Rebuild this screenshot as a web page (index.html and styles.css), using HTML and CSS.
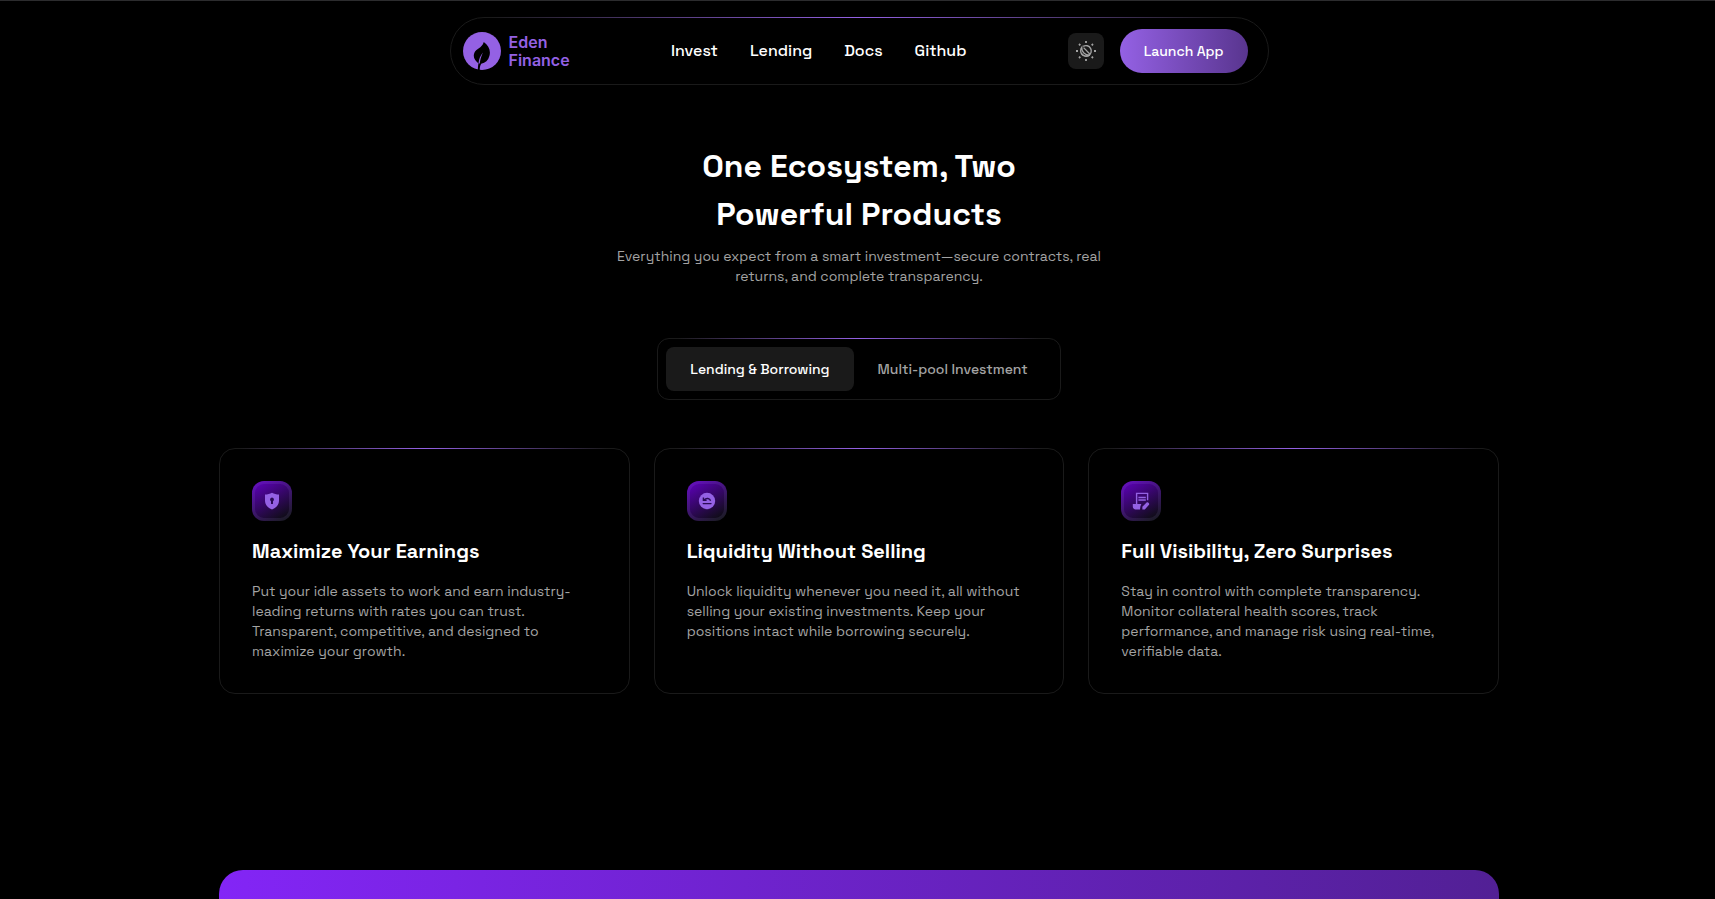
FILE: index.html
```
<!DOCTYPE html>
<html lang="en">
<head>
    <meta charset="UTF-8">
    <meta name="viewport" content="width=device-width, initial-scale=1.0">
    <title>Eden Finance</title>
    <link rel="stylesheet" href="styles.css">
</head>
<body>
    <div class="page">
        <header class="navbar glow">
            <a href="#" class="logo">
                <svg width="38" height="38" viewBox="0 0 38 38" aria-hidden="true">
                    <circle cx="19" cy="19" r="19" fill="#9461e4"/>
                    <path d="M14.8 38.2C14.9 35.6 15 33.6 15.5 31.4C12.3 28.8 9.6 25.6 11.3 21C13 16.4 18.8 16.6 20.8 10C25.6 13.6 28 18.2 26.4 24C25.2 28.4 22.4 31 18.2 31.8C17.2 33.4 16.7 35.6 16.7 38.2Z" fill="#000"/>
                    <path d="M15.5 31.4C16 27.2 17.2 23.8 20 20.6C18.2 24.6 17.2 27.8 16.8 31.6" fill="#9461e4"/>
                </svg>
                <span>Eden<br>Finance</span>
            </a>
            <nav class="nav-links">
                <a href="#invest">Invest</a>
                <a href="#lending">Lending</a>
                <a href="#docs">Docs</a>
                <a href="#github">Github</a>
            </nav>
            <div class="nav-actions">
                <button class="theme-btn" aria-label="Toggle theme">
                    <svg width="20" height="20" viewBox="0 0 20 20" fill="none" stroke="#a3a3a3" aria-hidden="true">
                        <path d="M7.2 5.4A5.3 5.3 0 1 1 5.2 12.2" stroke-width="1.4"/>
                        <path d="M5.8 6.2C5.4 10.8 9 14.4 13.8 14.2C9.8 16.6 4.6 14 4.6 9.8C4.6 8.4 5 7.2 5.8 6.2Z" stroke-width="1.2"/>
                        <path d="M7.6 6.6L13.8 13" stroke-width="1.3"/>
                        <path d="M10 0V2M10 18V20M0 10H2M18 10H20M3 3L4.3 4.3M15.7 15.7L17 17M3 17L4.3 15.7M15.7 4.3L17 3" stroke-width="1.8"/>
                    </svg>
                </button>
                <button class="launch-btn">Launch App</button>
            </div>
        </header>

        <main class="content">
            <section class="intro">
                <h1>One Ecosystem, Two Powerful Products</h1>
                <p>Everything you expect from a smart investment—secure contracts, real returns, and complete transparency.</p>
            </section>

            <div class="tabs glow" role="tablist">
                <button class="tab active" role="tab" aria-selected="true">Lending &amp; Borrowing</button>
                <button class="tab" role="tab" aria-selected="false">Multi-pool Investment</button>
            </div>

            <section class="cards">
                <article class="card glow">
                    <div class="card-icon">
                        <svg width="20" height="20" viewBox="0 0 20 20" aria-hidden="true">
                            <path d="M10 1.8C12.2 3 14.4 3.5 17 3.6V9.5C17 14 14.2 16.8 10 18.4C5.8 16.8 3 14 3 9.5V3.6C5.6 3.5 7.8 3 10 1.8Z" fill="#9461e4"/>
                            <path d="M10 6.6A2 2 0 0 0 9 10.3V13H11V10.3A2 2 0 0 0 10 6.6Z" fill="#2a0a55"/>
                        </svg>
                    </div>
                    <h2>Maximize Your Earnings</h2>
                    <p>Put your idle assets to work and earn industry-leading returns with rates you can trust. Transparent, competitive, and designed to maximize your growth.</p>
                </article>
                <article class="card glow">
                    <div class="card-icon">
                        <svg width="20" height="20" viewBox="0 0 20 20" aria-hidden="true">
                            <circle cx="10" cy="10" r="8.2" fill="#9461e4"/>
                            <path d="M6.2 12.6H14" stroke="#2a0a55" stroke-width="1.4" stroke-linecap="round"/>
                            <path d="M13.6 9.8C12.8 7.2 9.4 6.6 7.2 8.8M6.4 6.4V9.4H9.6" fill="none" stroke="#2a0a55" stroke-width="1.4"/>
                        </svg>
                    </div>
                    <h2>Liquidity Without Selling</h2>
                    <p>Unlock liquidity whenever you need it, all without selling your existing investments. Keep your positions intact while borrowing securely.</p>
                </article>
                <article class="card glow">
                    <div class="card-icon">
                        <svg width="20" height="20" viewBox="0 0 20 20" fill="none" stroke="#9461e4" aria-hidden="true">
                            <path d="M5.6 13.4V2.4H16.6V9.2" stroke-width="1.4"/>
                            <path d="M7.4 6.4H14.8M7.4 9H14.8" stroke-width="1.5"/>
                            <path d="M1.8 13H10.4L9.4 15.2L9 18.4H4.4C3 18.4 1.8 17.2 1.8 15.8Z" fill="#9461e4" stroke="none"/>
                            <path d="M11.4 18.4V15.8L15.6 11.4C16.8 10.4 19 12.4 18 13.8L13.8 18.4Z" fill="#9461e4" stroke="none"/>
                        </svg>
                    </div>
                    <h2>Full Visibility, Zero Surprises</h2>
                    <p>Stay in control with complete transparency. Monitor collateral health scores, track performance, and manage risk using real-time, verifiable data.</p>
                </article>
            </section>

            <section class="banner"></section>
        </main>
    </div>
</body>
</html>
```
FILE: styles.css
```
* {
    box-sizing: border-box;
    margin: 0;
    padding: 0;
}

body {
    background-color: #000;
    color: #fff;
    font-family: "Space Grotesk", Inter, sans-serif;
    font-size: 14px;
    line-height: 20px;
}

a {
    color: inherit;
    text-decoration: none;
}

button {
    border: none;
    font: inherit;
    font-weight: 500;
    cursor: pointer;
}

.page {
    min-height: 100vh;
    display: flex;
    flex-direction: column;
    align-items: center;
    padding: 16px 0 0 3px;
    border-top: 1px solid #2c2c2e;
}

/* purple line fading out along the top border */
.glow {
    position: relative;
    border: 1px solid #1a1a1a;
}

.glow::before {
    content: "";
    position: absolute;
    top: -1px;
    left: 5%;
    right: 5%;
    height: 1px;
    background: linear-gradient(90deg, transparent, #9461e4, transparent);
}

.navbar {
    width: 100%;
    max-width: 819px;
    display: flex;
    align-items: center;
    justify-content: space-between;
    padding: 11px 20px 11px 12px;
    border-radius: 34px;
}

.logo {
    display: flex;
    align-items: center;
    gap: 8px;
    color: #9461e4;
    font-family: Inter, sans-serif;
    font-size: 16px;
    font-weight: 600;
    line-height: 18px;
}

.nav-links {
    display: flex;
    gap: 32px;
    font-size: 16px;
    font-weight: 500;
}

.nav-actions {
    display: flex;
    align-items: center;
    gap: 16px;
}

.theme-btn {
    width: 36px;
    height: 36px;
    display: flex;
    align-items: center;
    justify-content: center;
    border-radius: 8px;
    background-color: #1a1a1a;
}

.launch-btn {
    padding: 12px 24px;
    border-radius: 22px;
    background: linear-gradient(90deg, #9461e4, #59358f);
    color: #fff;
}

.content {
    width: 100%;
    max-width: 1280px;
    flex: 1;
    display: flex;
    flex-direction: column;
    align-items: center;
    padding-top: 57px;
}

.intro {
    max-width: 500px;
    text-align: center;
}

.intro h1 {
    max-width: 400px;
    margin: 0 auto 8px;
    font-size: 32px;
    font-weight: 600;
    line-height: 48px;
}

.intro p,
.card p {
    color: #a3a3a3;
}

.tabs {
    display: flex;
    margin-top: 52px;
    padding: 8px;
    border-radius: 12px;
}

.tab {
    padding: 12px 24px;
    border-radius: 8px;
    background: none;
    color: #a3a3a3;
}

.tab.active {
    background-color: #1a1a1a;
    color: #fff;
}

.cards {
    width: 100%;
    display: grid;
    grid-template-columns: repeat(3, 1fr);
    gap: 24px;
    margin-top: 48px;
}

.card {
    padding: 32px;
    border-radius: 16px;
}

.card-icon {
    width: 40px;
    height: 40px;
    display: flex;
    align-items: center;
    justify-content: center;
    border-radius: 12px;
    background: linear-gradient(150deg, #6200c4, #0d0d12 90%);
    box-shadow: inset 0 0 0 3px rgba(160, 130, 220, 0.12);
}

.card h2 {
    margin: 16px 0;
    font-size: 20px;
    font-weight: 600;
    line-height: 28px;
}

.banner {
    width: 100%;
    min-height: 29px;
    flex: 1;
    margin-top: 176px;
    border-radius: 24px 24px 0 0;
    background: linear-gradient(90deg, #8325f6, #522095);
}
```
